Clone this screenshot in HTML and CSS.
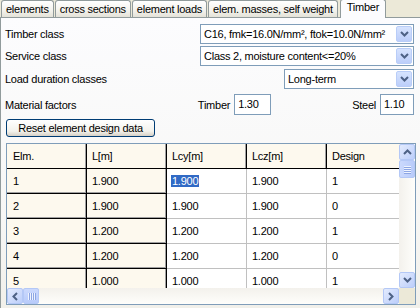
FILE: index.html
```html
<!DOCTYPE html>
<html lang="en">
<head>
    <meta charset="UTF-8">
    <title>Timber</title>
    <link rel="stylesheet" href="styles.css">
</head>
<body>
    <!-- Tab strip -->
    <div class="tabs">
        <div class="tab">elements</div>
        <div class="tab">cross sections</div>
        <div class="tab">element loads</div>
        <div class="tab">elem. masses, self weight</div>
        <div class="tab active">Timber</div>
    </div>

    <!-- Tab page -->
    <div class="page">
        <div class="row row-1">
            <span class="label">Timber class</span>
            <div class="combo wide">
                <span class="combo-value">C16, fmk=16.0N/mm², ftok=10.0N/mm²</span>
                <span class="combo-btn"><svg width="9" height="6" viewBox="0 0 9 6"><path d="M1 1l3.5 3.5L8 1" fill="none" stroke="#4d6185" stroke-width="2"/></svg></span>
            </div>
        </div>
        <div class="row row-2">
            <span class="label">Service class</span>
            <div class="combo wide">
                <span class="combo-value">Class 2, moisture content&lt;=20%</span>
                <span class="combo-btn"><svg width="9" height="6" viewBox="0 0 9 6"><path d="M1 1l3.5 3.5L8 1" fill="none" stroke="#4d6185" stroke-width="2"/></svg></span>
            </div>
        </div>
        <div class="row row-3">
            <span class="label">Load duration classes</span>
            <div class="combo narrow">
                <span class="combo-value">Long-term</span>
                <span class="combo-btn"><svg width="9" height="6" viewBox="0 0 9 6"><path d="M1 1l3.5 3.5L8 1" fill="none" stroke="#4d6185" stroke-width="2"/></svg></span>
            </div>
        </div>
        <div class="row row-4">
            <span class="label">Material factors</span>
            <div class="factor">
                <span>Timber</span>
                <div class="edit timber">1.30</div>
            </div>
            <div class="factor steel">
                <span>Steel</span>
                <div class="edit">1.10</div>
            </div>
        </div>
        <div class="row row-5">
            <div class="btn">Reset element design data</div>
        </div>

        <!-- Design data grid -->
        <div class="grid">
            <div class="grid-cells">
                <div class="grid-row head">
                    <div class="cell fixed">Elm.</div>
                    <div class="cell fixed">L[m]</div>
                    <div class="cell">Lcy[m]</div>
                    <div class="cell">Lcz[m]</div>
                    <div class="cell">Design</div>
                </div>
                <div class="grid-row">
                    <div class="cell fixed">1</div>
                    <div class="cell fixed">1.900</div>
                    <div class="cell"><span class="selected">1.900</span></div>
                    <div class="cell">1.900</div>
                    <div class="cell">1</div>
                </div>
                <div class="grid-row">
                    <div class="cell fixed">2</div>
                    <div class="cell fixed">1.900</div>
                    <div class="cell">1.900</div>
                    <div class="cell">1.900</div>
                    <div class="cell">0</div>
                </div>
                <div class="grid-row">
                    <div class="cell fixed">3</div>
                    <div class="cell fixed">1.200</div>
                    <div class="cell">1.200</div>
                    <div class="cell">1.200</div>
                    <div class="cell">1</div>
                </div>
                <div class="grid-row">
                    <div class="cell fixed">4</div>
                    <div class="cell fixed">1.200</div>
                    <div class="cell">1.200</div>
                    <div class="cell">1.200</div>
                    <div class="cell">0</div>
                </div>
                <div class="grid-row">
                    <div class="cell fixed">5</div>
                    <div class="cell fixed">1.000</div>
                    <div class="cell">1.000</div>
                    <div class="cell">1.000</div>
                    <div class="cell">1</div>
                </div>
            </div>

            <!-- Vertical scrollbar -->
            <div class="vscroll">
                <span class="sb-btn"><svg width="9" height="6" viewBox="0 0 9 6"><path d="M1 5l3.5-3.5L8 5" fill="none" stroke="#4d6185" stroke-width="2"/></svg></span>
                <span class="sb-thumb v"></span>
                <span class="sb-track"></span>
                <span class="sb-btn"><svg width="9" height="6" viewBox="0 0 9 6"><path d="M1 1l3.5 3.5L8 1" fill="none" stroke="#4d6185" stroke-width="2"/></svg></span>
            </div>

            <!-- Horizontal scrollbar -->
            <div class="hscroll">
                <span class="sb-btn"><svg width="6" height="9" viewBox="0 0 6 9"><path d="M5 1L1.5 4.5 5 8" fill="none" stroke="#4d6185" stroke-width="2"/></svg></span>
                <span class="sb-thumb h"></span>
                <span class="sb-track"></span>
                <span class="sb-btn"><svg width="6" height="9" viewBox="0 0 6 9"><path d="M1 1l3.5 3.5L1 8" fill="none" stroke="#4d6185" stroke-width="2"/></svg></span>
            </div>
            <div class="corner"></div>
        </div>
    </div>
</body>
</html>
```

FILE: styles.css
```css
/* General */
body {
    margin: 0;
    width: 420px;
    height: 308px;
    overflow: hidden;
    background: #ece9d8;
    font-family: 'Liberation Sans', Arial, sans-serif;
    font-size: 11px;
    letter-spacing: -0.25px;
    color: #000;
}

/* Tab strip */
.tabs {
    display: flex;
    align-items: flex-end;
    height: 17px;
    padding-left: 1px;
    gap: 1px;
}

.tab {
    height: 17px;
    line-height: 16px;
    padding: 0 4px;
    border: 1px solid #919b9c;
    border-bottom: none;
    border-radius: 3px 3px 0 0;
    background: linear-gradient(#ffffff, #f3f2ec 60%, #e4e2d8);
    white-space: nowrap;
    box-sizing: border-box;
}

.tab.active {
    height: 19px;
    line-height: 15px;
    margin-bottom: -1px;
    margin-left: 1px;
    padding: 0 6px;
    background: #fcfcfe;
    position: relative;
    z-index: 1;
}

/* Tab page */
.page {
    height: 290px;
    border-top: 1px solid #919b9c;
    border-left: 1px solid #919b9c;
    background: linear-gradient(#fcfcfe, #f7f7f5 70%, #f1f0ea);
    padding: 0 6px 0 4px;
}

.row {
    display: flex;
    align-items: center;
    justify-content: space-between;
    height: 20px;
}

.row-1 { margin-top: 6px; }
.row-2 { margin-top: 2px; }
.row-3 { margin-top: 3px; }
.row-4 { margin-top: 5px; height: 21px; }
.row-5 { margin-top: 4px; height: 18px; }

/* Combo boxes */
.combo {
    display: flex;
    height: 20px;
    box-sizing: border-box;
    border: 1px solid #7f9db9;
    background: #fff;
}

.combo.wide { width: 214px; }
.combo.narrow { width: 130px; }

.combo-value {
    flex: 1;
    padding-left: 3px;
    line-height: 18px;
    white-space: nowrap;
    overflow: hidden;
}

.combo-btn {
    width: 16px;
    margin: 1px;
    display: flex;
    align-items: center;
    justify-content: center;
    border: 1px solid #b9cdf8;
    border-radius: 2px;
    background: linear-gradient(#d6e3fe, #bccefa);
    box-sizing: border-box;
}

/* Material factors */
.factor {
    display: flex;
    align-items: center;
    gap: 4px;
    margin-left: auto;
}

.factor.steel {
    margin-left: 81px;
}

.edit {
    height: 21px;
    line-height: 19px;
    box-sizing: border-box;
    border: 1px solid #7f9db9;
    background: #fff;
    padding-left: 3px;
    width: 34px;
}

.edit.timber {
    width: 37px;
}

/* Button */
.btn {
    width: 149px;
    height: 18px;
    line-height: 16px;
    box-sizing: border-box;
    text-align: center;
    border: 1px solid #003c74;
    border-radius: 3px;
    background: linear-gradient(#ffffff, #f3f2ec 70%, #d6d0c5);
    margin-left: 1px;
}

/* Grid */
.grid {
    display: grid;
    grid-template-columns: 1fr 16px;
    grid-template-rows: 144px 16px;
    margin: 6px 0 0 1px;
    width: 408px;
    border: 1px solid #7f9db9;
    background: #fff;
}

.grid-cells {
    overflow: hidden;
}

.grid-row {
    display: grid;
    grid-template-columns: 80px 80px 80px 80px 80px;
    height: 25px;
}

.cell {
    border-right: 1px solid #c0c0c0;
    border-bottom: 1px solid #c0c0c0;
    padding-left: 5px;
    line-height: 24px;
    white-space: nowrap;
    overflow: hidden;
}

.cell.fixed {
    background: #fdf9ee;
    border-right-color: #000;
    border-bottom-color: #000;
    box-shadow: inset -1px -1px 0 #a0a0a0;
}

.cell:first-child {
    padding-left: 6px;
}

.head .cell {
    background: #fdf9ee;
    border-bottom-color: #000;
    border-right-color: #000;
    box-shadow: inset -1px 0 0 #a0a0a0;
}

.selected {
    background: #316ac5;
    color: #fff;
    padding: 0 1px;
    margin-left: -1px;
}

/* Scrollbars */
.vscroll,
.hscroll {
    display: flex;
    background: linear-gradient(90deg, #f3f1ec, #fefefb);
}

.vscroll {
    flex-direction: column;
}

.hscroll {
    background: linear-gradient(#f3f1ec, #fefefb);
}

.sb-btn,
.sb-thumb {
    width: 16px;
    height: 16px;
    flex: none;
    box-sizing: border-box;
    display: flex;
    align-items: center;
    justify-content: center;
    border: 1px solid #b4c8f6;
    border-radius: 2px;
    background: linear-gradient(135deg, #e3ebfe, #bccefa);
}

.sb-thumb.v {
    height: 18px;
    background:
        repeating-linear-gradient(#eef3fe 0 1px, #8da6e4 1px 2px) 4px 5px / 7px 8px no-repeat,
        linear-gradient(90deg, #cbd9fd, #b8cbfa);
}

.sb-thumb.h {
    background:
        repeating-linear-gradient(90deg, #eef3fe 0 1px, #8da6e4 1px 2px) 4px 4px / 8px 7px no-repeat,
        linear-gradient(#cbd9fd, #b8cbfa);
}

.sb-track {
    flex: 1;
}

.corner {
    background: #ece9d8;
}
```
